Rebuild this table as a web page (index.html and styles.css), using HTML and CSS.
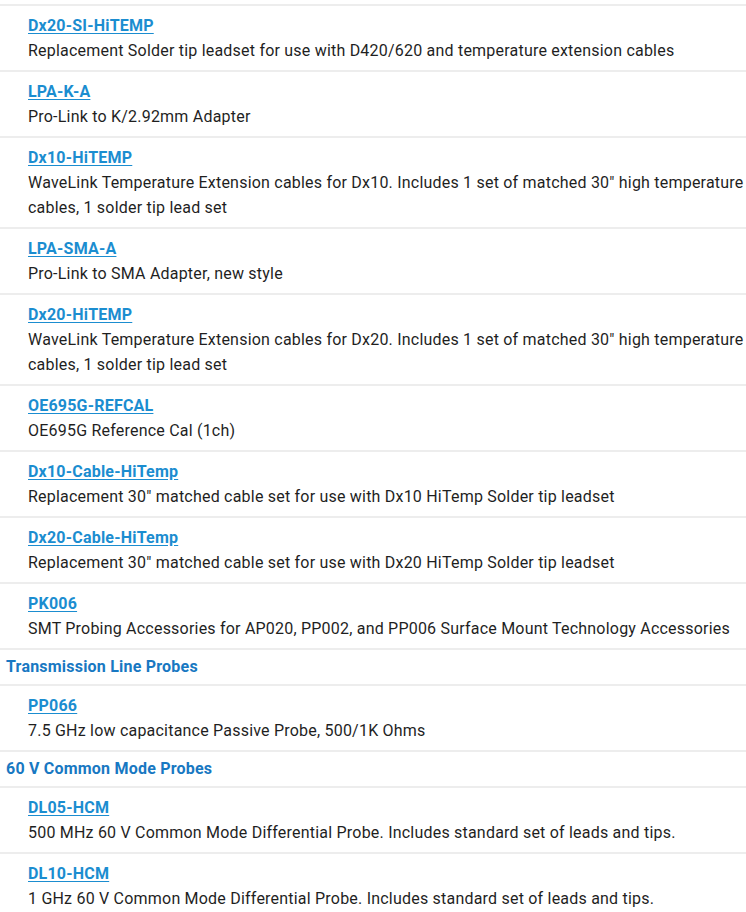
FILE: index.html
```html
<!DOCTYPE html>
<html>
<head>
<meta charset="utf-8">
<link rel="stylesheet" href="styles.css">
</head>
<body>
<div class="list">
  <div class="item"><a class="title" href="#">Dx20-SI-HiTEMP</a><div class="desc">Replacement Solder tip leadset for use with D420/620 and temperature extension cables</div></div>
  <div class="item"><a class="title" href="#">LPA-K-A</a><div class="desc">Pro-Link to K/2.92mm Adapter</div></div>
  <div class="item"><a class="title" href="#">Dx10-HiTEMP</a><div class="desc">WaveLink Temperature Extension cables for Dx10. Includes 1 set of matched 30" high temperature cables, 1 solder tip lead set</div></div>
  <div class="item"><a class="title" href="#">LPA-SMA-A</a><div class="desc">Pro-Link to SMA Adapter, new style</div></div>
  <div class="item"><a class="title" href="#">Dx20-HiTEMP</a><div class="desc">WaveLink Temperature Extension cables for Dx20. Includes 1 set of matched 30" high temperature cables, 1 solder tip lead set</div></div>
  <div class="item"><a class="title" href="#">OE695G-REFCAL</a><div class="desc">OE695G Reference Cal (1ch)</div></div>
  <div class="item"><a class="title" href="#">Dx10-Cable-HiTemp</a><div class="desc">Replacement 30" matched cable set for use with Dx10 HiTemp Solder tip leadset</div></div>
  <div class="item"><a class="title" href="#">Dx20-Cable-HiTemp</a><div class="desc">Replacement 30" matched cable set for use with Dx20 HiTemp Solder tip leadset</div></div>
  <div class="item"><a class="title" href="#">PK006</a><div class="desc">SMT Probing Accessories for AP020, PP002, and PP006 Surface Mount Technology Accessories</div></div>
  <div class="category">Transmission Line Probes</div>
  <div class="item"><a class="title" href="#">PP066</a><div class="desc">7.5 GHz low capacitance Passive Probe, 500/1K Ohms</div></div>
  <div class="category">60 V Common Mode Probes</div>
  <div class="item"><a class="title" href="#">DL05-HCM</a><div class="desc">500 MHz 60 V Common Mode Differential Probe. Includes standard set of leads and tips.</div></div>
  <div class="item"><a class="title" href="#">DL10-HCM</a><div class="desc">1 GHz 60 V Common Mode Differential Probe. Includes standard set of leads and tips.</div></div>
</div>
</body>
</html>
```
FILE: styles.css
```css
html, body {
  margin: 0;
  padding: 0;
  background: #fff;
  overflow: hidden;
}
body {
  font-family: Roboto, "Liberation Sans", Arial, sans-serif;
  font-size: 16px;
  line-height: 25px;
  letter-spacing: 0.21px;
  color: #1f1f1f;
}
.list {
  width: 780px;
  padding-top: 4px;
}
.item {
  border-top: 2px solid #ededed;
  padding: 7px 0 7px 28px;
}
.title {
  display: inline-block;
  font-weight: 700;
  color: #1b8dd0;
  text-decoration: underline;
  text-underline-offset: 2px;
}
.desc {
  color: #1f1f1f;
}
.category {
  border-top: 2px solid #ededed;
  padding: 4px 0 5px 6px;
  font-weight: 700;
  color: #1878c2;
}
```
